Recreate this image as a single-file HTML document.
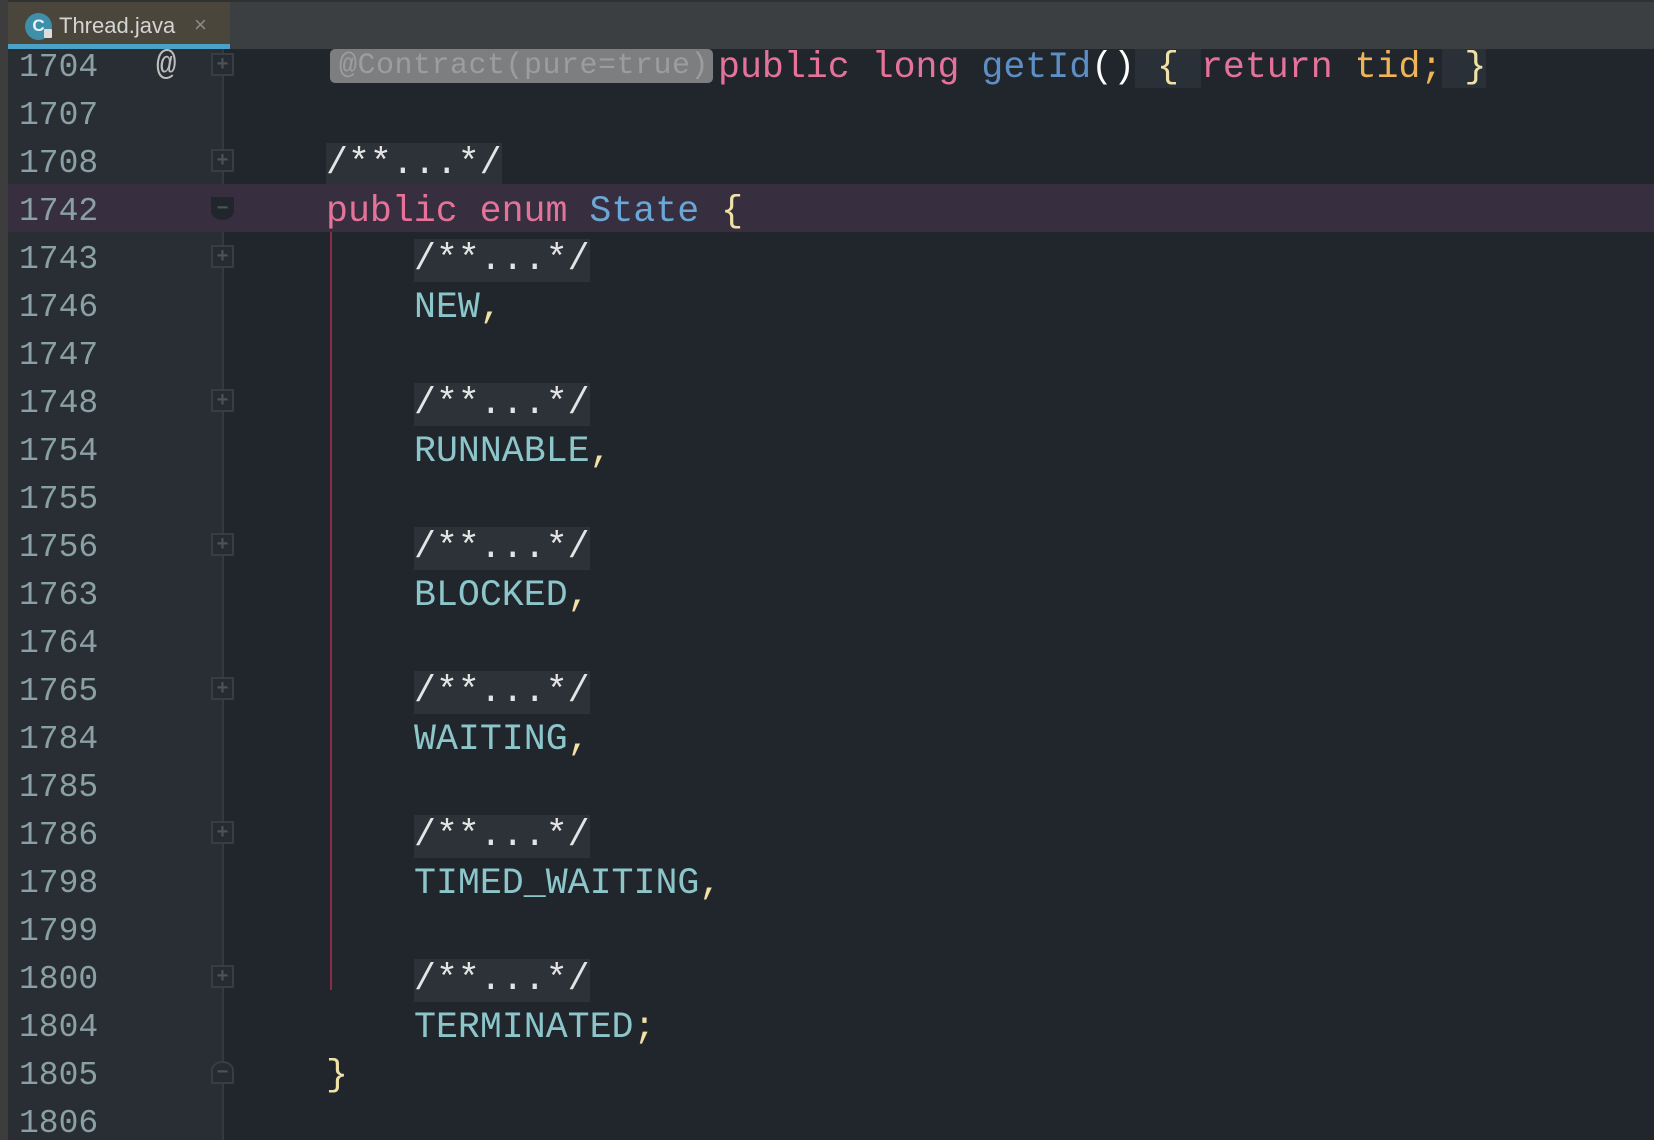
<!DOCTYPE html>
<html><head><meta charset="utf-8"><style>
*{margin:0;padding:0;box-sizing:border-box}
body{width:1654px;height:1140px;overflow:hidden;background:#21262d;font-family:"Liberation Mono",monospace;position:relative}
#tabbar{position:absolute;left:0;top:0;width:1654px;height:49px;background:#3c3f41;border-top:2px solid #2f3133}
#strip{position:absolute;left:0;top:0;width:8px;height:1140px;background:#3d3d3d;z-index:5}
#tab{position:absolute;left:8px;top:2px;width:222px;height:47px;background:#4a463b}
#tab .ul{position:absolute;left:0;bottom:0;width:222px;height:5px;background:#4aa3c7}
#tab .ic{position:absolute;left:17px;top:11px;width:27px;height:27px;border-radius:50%;background:#3f8fa9;color:#e8f4f8;font:bold 17px "Liberation Sans",sans-serif;text-align:center;line-height:26px}
#tab .lk{position:absolute;left:36px;top:27px;width:8px;height:9px;background:#ddd;border-radius:1px}
#tab .t{position:absolute;left:51px;top:11px;font:22px "Liberation Sans",sans-serif;color:#d4d4d4}
#tab .x{position:absolute;left:186px;top:10px;font:22px "Liberation Sans",sans-serif;color:#8a8a8a}
#gutter{position:absolute;left:8px;top:49px;width:214px;height:1091px;background:#282e33}
#gline{position:absolute;left:222px;top:49px;width:2px;height:1091px;background:#323940}
#ed{position:absolute;left:0;top:49px;width:1654px;height:1091px;overflow:hidden}
.row{position:absolute;left:0;width:1654px;height:48px}
.ln{position:absolute;left:19px;top:9px;font-size:33px;color:#8aa0a6;white-space:pre}
.cd{position:absolute;left:326px;top:7px;font-size:36.6px;white-space:pre;color:#e0e0e0}
.fold{position:absolute;left:211px;top:13px;width:23px;height:23px;border:2px solid #363d44;background:#252b31;color:#4a525a;font:bold 20px "Liberation Sans";text-align:center;line-height:18px}
.cm{background:#2c3238;color:#e4e4e4;padding-bottom:2px}
.k{color:#e57399}.s{color:#6aa6d6}.f{color:#5d8fc4}.y{color:#f0e2a6}.o{color:#f0b458}.e{color:#8cc6ca}.w{color:#ffffff}
.hb{background:#2a3037}
</style></head><body>
<div id="strip"></div>
<div id="tabbar"></div>
<div id="tab"><div class="ic">C</div><div class="lk"></div><div class="t">Thread.java</div><div class="x">×</div><div class="ul"></div></div>
<div id="gutter"></div>
<div id="gline"></div>
<div id="ed">
<div class="row" style="top:-9px"><span class="ln">1704</span><span style="position:absolute;left:156px;top:7px;font-size:34px;color:#bdbdbd">@</span><div class="fold">+</div>
<span style="position:absolute;left:330px;top:9px;height:34px;width:383px;background:#7c7e80;border-radius:5px"></span>
<span style="position:absolute;left:339px;top:9px;font-size:30px;letter-spacing:0.5px;color:#9d9d9d;white-space:pre">@Contract(pure=true)</span>
<span class="cd" style="left:718px"><span class="k">public long </span><span class="f">getId</span><span class="w">()</span><span class="hb y"> { </span><span class="k">return </span><span class="o">tid;</span><span class="hb y"> }</span></span></div>
<div class="row" style="top:39px"><span class="ln">1707</span></div>
<div class="row" style="top:87px"><span class="ln">1708</span><div class="fold">+</div><span class="cd cm">/**...*/</span></div>
<div class="row" style="top:135px;background:#372f3f"><span class="ln">1742</span><div class="fold" style="background:#21262c;border-color:#21262c;color:#4a525a;border-radius:0 0 50% 50%/0 0 40% 40%">−</div><span class="cd"><span class="k">public enum </span><span class="s">State </span><span class="y">{</span></span></div>
<div style="position:absolute;left:330px;top:183px;width:2px;height:758px;background:#8a2c48"></div>
<div class="row" style="top:183px"><span class="ln">1743</span><div class="fold">+</div><span class="cd cm" style="left:414px">/**...*/</span></div>
<div class="row" style="top:231px"><span class="ln">1746</span><span class="cd e" style="left:414px">NEW<span class="y">,</span></span></div>
<div class="row" style="top:279px"><span class="ln">1747</span></div>
<div class="row" style="top:327px"><span class="ln">1748</span><div class="fold">+</div><span class="cd cm" style="left:414px">/**...*/</span></div>
<div class="row" style="top:375px"><span class="ln">1754</span><span class="cd e" style="left:414px">RUNNABLE<span class="y">,</span></span></div>
<div class="row" style="top:423px"><span class="ln">1755</span></div>
<div class="row" style="top:471px"><span class="ln">1756</span><div class="fold">+</div><span class="cd cm" style="left:414px">/**...*/</span></div>
<div class="row" style="top:519px"><span class="ln">1763</span><span class="cd e" style="left:414px">BLOCKED<span class="y">,</span></span></div>
<div class="row" style="top:567px"><span class="ln">1764</span></div>
<div class="row" style="top:615px"><span class="ln">1765</span><div class="fold">+</div><span class="cd cm" style="left:414px">/**...*/</span></div>
<div class="row" style="top:663px"><span class="ln">1784</span><span class="cd e" style="left:414px">WAITING<span class="y">,</span></span></div>
<div class="row" style="top:711px"><span class="ln">1785</span></div>
<div class="row" style="top:759px"><span class="ln">1786</span><div class="fold">+</div><span class="cd cm" style="left:414px">/**...*/</span></div>
<div class="row" style="top:807px"><span class="ln">1798</span><span class="cd e" style="left:414px">TIMED_WAITING<span class="y">,</span></span></div>
<div class="row" style="top:855px"><span class="ln">1799</span></div>
<div class="row" style="top:903px"><span class="ln">1800</span><div class="fold">+</div><span class="cd cm" style="left:414px">/**...*/</span></div>
<div class="row" style="top:951px"><span class="ln">1804</span><span class="cd e" style="left:414px">TERMINATED<span class="y">;</span></span></div>
<div class="row" style="top:999px"><span class="ln">1805</span><div class="fold" style="border-radius:50% 50% 0 0/40% 40% 0 0">−</div><span class="cd y">}</span></div>
<div class="row" style="top:1047px"><span class="ln">1806</span></div>
</div>
</body></html>
